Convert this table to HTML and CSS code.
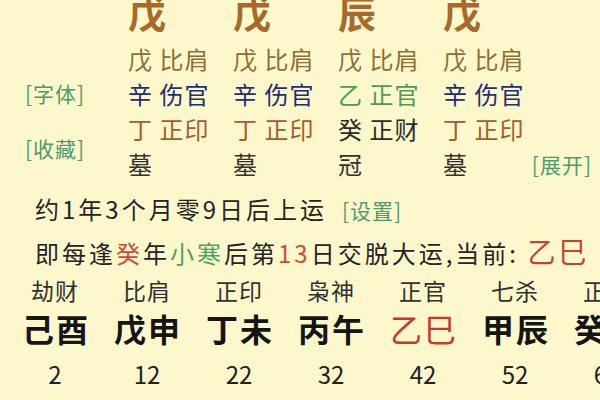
FILE: index.html
```html
<!DOCTYPE html>
<html lang="zh-CN">
<head>
<meta charset="utf-8">
<title>八字排盘</title>
<link rel="stylesheet" href="styles.css">
</head>
<body>
<div class="page">
  <section class="chart">
    <div class="side">
      <span class="link">[字体]</span>
      <span class="link">[收藏]</span>
    </div>
    <div class="pillar">
      <div class="stem">戊</div>
      <div class="hide c-bj">戊 比肩</div>
      <div class="hide c-sg">辛 伤官</div>
      <div class="hide c-zy">丁 正印</div>
      <div class="state">墓</div>
    </div>
    <div class="pillar">
      <div class="stem">戊</div>
      <div class="hide c-bj">戊 比肩</div>
      <div class="hide c-sg">辛 伤官</div>
      <div class="hide c-zy">丁 正印</div>
      <div class="state">墓</div>
    </div>
    <div class="pillar">
      <div class="stem">辰</div>
      <div class="hide c-bj">戊 比肩</div>
      <div class="hide c-zg">乙 正官</div>
      <div class="hide c-zc">癸 正财</div>
      <div class="state">冠</div>
    </div>
    <div class="pillar last">
      <div class="stem">戊</div>
      <div class="hide c-bj">戊 比肩</div>
      <div class="hide c-sg">辛 伤官</div>
      <div class="hide c-zy">丁 正印</div>
      <div class="state split"><span>墓</span><span class="link">[展开]</span></div>
    </div>
  </section>

  <p class="line">约1年3个月零9日后上运<span class="link set">[设置]</span></p>
  <p class="line">即每逢<span class="red">癸</span>年<span class="green">小寒</span>后第<span class="red">13</span>日交脱大运,当前: <span class="cur">乙巳</span></p>

  <section class="dayun">
    <div class="yun"><div class="ss">劫财</div><div class="gz">己酉</div><div class="age">2</div></div>
    <div class="yun"><div class="ss">比肩</div><div class="gz">戊申</div><div class="age">12</div></div>
    <div class="yun"><div class="ss">正印</div><div class="gz">丁未</div><div class="age">22</div></div>
    <div class="yun"><div class="ss">枭神</div><div class="gz">丙午</div><div class="age">32</div></div>
    <div class="yun"><div class="ss">正官</div><div class="gz now">乙巳</div><div class="age">42</div></div>
    <div class="yun"><div class="ss">七杀</div><div class="gz">甲辰</div><div class="age">52</div></div>
    <div class="yun"><div class="ss">正官</div><div class="gz">癸卯</div><div class="age">62</div></div>
  </section>
</div>
</body>
</html>
```

FILE: styles.css
```css
html, body {
  margin: 0;
  padding: 0;
  background: #fcf8cc;
}

.page {
  width: 600px;
  height: 400px;
  overflow: hidden;
  font-family: "Noto Sans CJK SC", "Noto Sans", sans-serif;
  color: #2a2a2a;
  background: #fcf8cc;
}

.chart {
  display: flex;
  margin-top: -6px;
}

.side {
  width: 128px;
  flex: none;
  display: flex;
  flex-direction: column;
  align-items: flex-start;
  padding-top: 84px;
  gap: 25px;
  box-sizing: border-box;
  padding-left: 25px;
}

.link {
  color: #4f9a6c;
  font-size: 21px;
  line-height: 30px;
  letter-spacing: 1px;
  white-space: nowrap;
}

.pillar {
  width: 105px;
  flex: none;
  display: flex;
  flex-direction: column;
}

.pillar.last {
  flex: 1;
  width: auto;
}

.stem {
  font-size: 38px;
  font-weight: bold;
  line-height: 36px;
  height: 36px;
  margin-bottom: 11px;
  color: #a8692a;
  letter-spacing: 2px;
}

.hide, .state {
  font-size: 24px;
  line-height: 35px;
  height: 35px;
  white-space: nowrap;
  letter-spacing: 1px;
}

.c-bj { color: #8e6e34; }
.c-sg { color: #232c74; }
.c-zy { color: #a45c2e; }
.c-zg { color: #4f9a55; }
.c-zc { color: #2b2b2b; }

.state { color: #333; }

.split {
  display: flex;
  justify-content: space-between;
  align-items: center;
  padding-right: 8px;
}

.line {
  margin: 0;
  padding-left: 35px;
  font-size: 24px;
  line-height: 42px;
  height: 42px;
  letter-spacing: 3px;
  white-space: nowrap;
  color: #242424;
}

.line:first-of-type {
  margin-top: 7px;
}

.set {
  margin-left: 15px;
  font-size: 21px;
  letter-spacing: 1px;
}

.red { color: #d24a36; }
.green { color: #4f9f62; }

.cur {
  font-size: 28px;
  color: #c8432e;
}

.dayun {
  display: flex;
  padding-left: 9px;
}

.yun {
  width: 92px;
  flex: none;
  text-align: center;
}

.ss {
  font-size: 23px;
  line-height: 36px;
  color: #303030;
  letter-spacing: 1px;
}

.gz {
  font-size: 32px;
  font-weight: bold;
  line-height: 40px;
  color: #151515;
  letter-spacing: 2px;
  text-indent: 2px;
  white-space: nowrap;
}

.gz.now {
  color: #c8392a;
  font-weight: normal;
}

.age {
  font-size: 24px;
  line-height: 52px;
  color: #222;
}
```
